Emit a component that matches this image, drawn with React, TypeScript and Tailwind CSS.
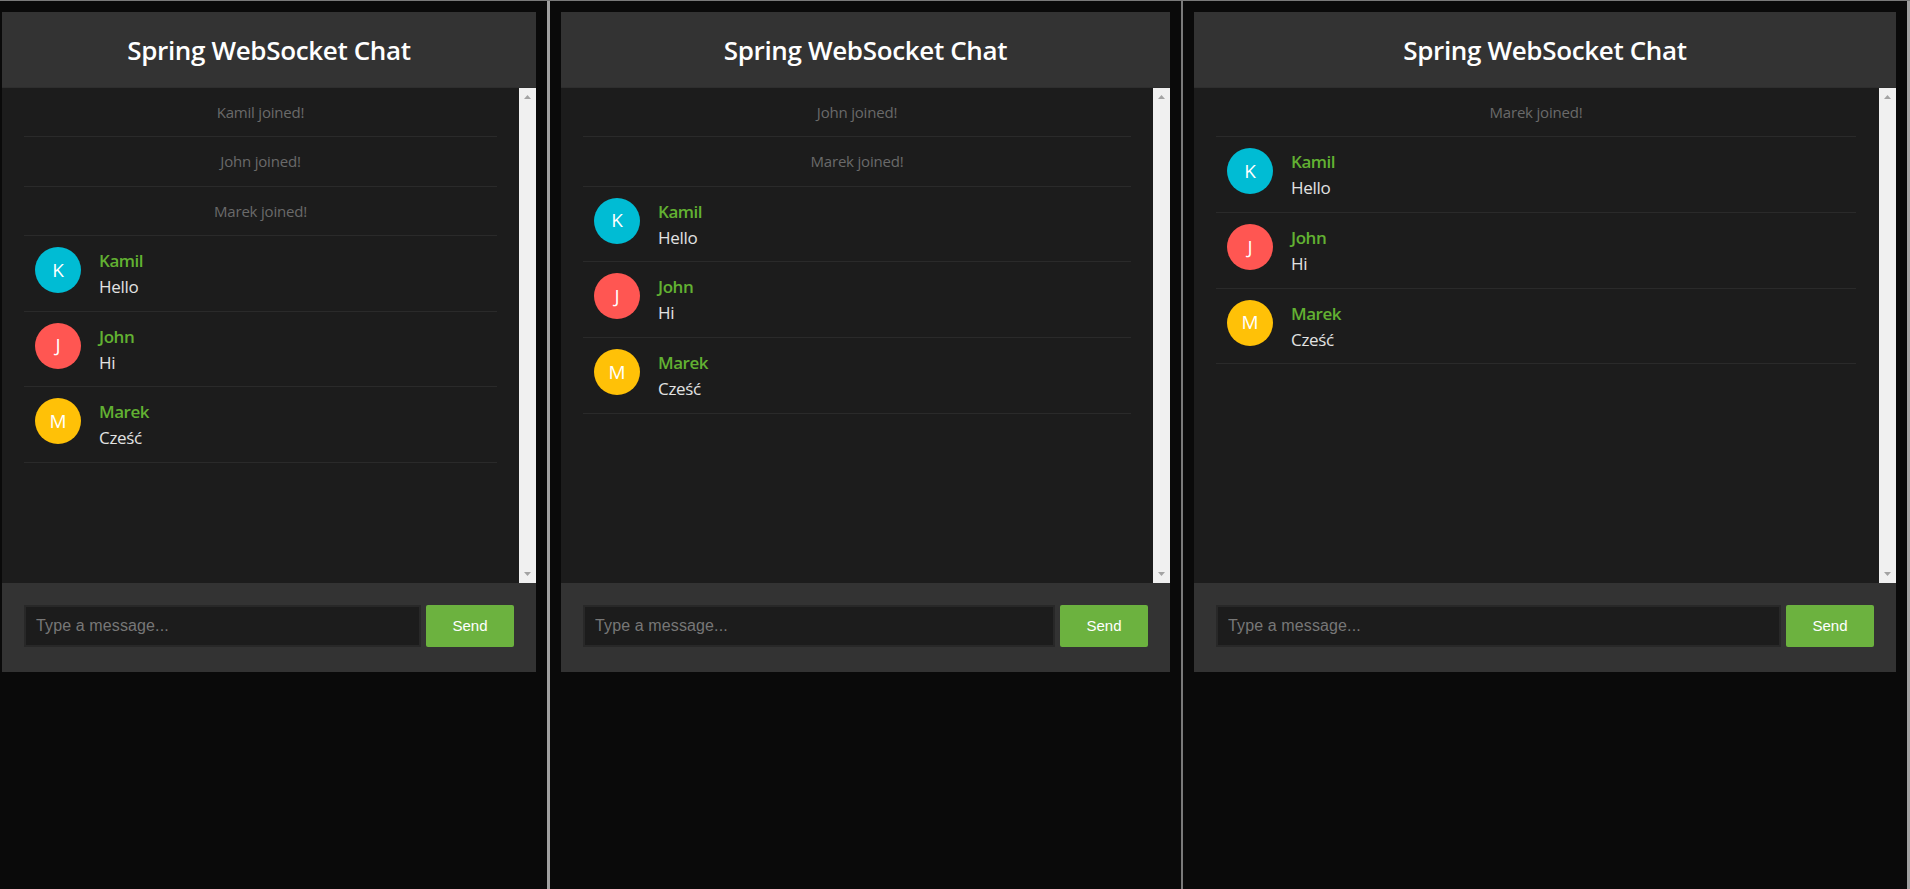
import React from 'react';

type Row =
  | { kind: 'system'; text: string }
  | { kind: 'chat'; name: string; text: string };

const avatarColors: Record<string, string> = {
  Kamil: 'bg-[#00bcd4]',
  John: 'bg-[#ff5652]',
  Marek: 'bg-[#ffc107]',
};

const chatRows: Row[] = [
  { kind: 'chat', name: 'Kamil', text: 'Hello' },
  { kind: 'chat', name: 'John', text: 'Hi' },
  { kind: 'chat', name: 'Marek', text: 'Cześć' },
];

const joined = (name: string): Row => ({ kind: 'system', text: `${name} joined!` });

const Scrollbar: React.FC = () => (
  <div className="flex w-[17px] shrink-0 flex-col items-center justify-between bg-[#f0f0f0] py-[7px]">
    <svg width="7" height="4" viewBox="0 0 7 4"><path d="M3.5 0L7 4H0z" fill="#a3a3a3" /></svg>
    <svg width="7" height="4" viewBox="0 0 7 4"><path d="M0 0H7L3.5 4z" fill="#a3a3a3" /></svg>
  </div>
);

const MessageRow: React.FC<{ row: Row }> = ({ row }) => {
  if (row.kind === 'system') {
    return (
      <li className="flex h-[49.33px] items-center justify-center border-b border-[#2a2a2a] text-[15px] tracking-[-0.2px] text-[#6a6a6a]">
        {row.text}
      </li>
    );
  }
  return (
    <li className="relative flex h-[75.67px] border-b border-[#2a2a2a] pl-[75px] pt-[11px]">
      <div className={`absolute left-[11px] top-[11px] flex h-[46px] w-[46px] items-center justify-center rounded-full text-[19px] text-white ${avatarColors[row.name]}`}>
        {row.name[0]}
      </div>
      <div>
        <div className="text-[17px] leading-[27px] font-semibold tracking-[-0.45px] text-[#62b132]">{row.name}</div>
        <div className="text-[17px] leading-[26px] tracking-[-0.3px] text-[#e2e2e2]">{row.text}</div>
      </div>
    </li>
  );
};

const ChatPanel: React.FC<{ rows: Row[]; width: string; gutter: string }> = ({ rows, width, gutter }) => (
  <div className={`flex h-[660px] shrink-0 flex-col bg-[#333333] ${width}`}>
    <header className="flex h-[76px] shrink-0 items-center justify-center border-b border-[#2e2e2e] pt-[1px]">
      <h1 className="text-[26px] font-semibold tracking-[-0.35px] text-white">Spring WebSocket Chat</h1>
    </header>
    <div className="flex h-[495px] shrink-0 bg-[#1c1c1c]">
      <ul className={`min-w-0 flex-1 pl-[22px] ${gutter}`}>
        {rows.map((row, i) => (
          <MessageRow key={i} row={row} />
        ))}
      </ul>
      <Scrollbar />
    </div>
    <form className="flex flex-1 gap-[5px] pb-[25px] pl-[22px] pr-[22px] pt-[22px]">
      <input
        placeholder="Type a message..."
        className="h-[42px] min-w-0 flex-1 border-2 border-[#282828] bg-[#1c1c1c] px-[10px] text-[16px] tracking-[0.12px] outline-none placeholder:text-[#777777] font-['Liberation_Sans',Arial,sans-serif]"
      />
      <button
        type="button"
        className="h-[42px] w-[88px] shrink-0 rounded-[2px] bg-[#6cb23f] text-[15px] text-white font-['Liberation_Sans',Arial,sans-serif]"
      >
        Send
      </button>
    </form>
  </div>
);

const App: React.FC = () => (
  <div className="flex h-[889px] w-full overflow-hidden border-t border-[#7a7a7a] bg-[#0a0a0a] font-['Open_Sans','Noto_Sans',sans-serif]">
    <section className="w-[550px] shrink-0 border-r-[3px] border-[#a0a0a0] pl-[2px] pt-[11px]">
      <ChatPanel width="w-[534px]" gutter="pr-[22px]" rows={[joined('Kamil'), joined('John'), joined('Marek'), ...chatRows]} />
    </section>
    <section className="w-[633px] shrink-0 border-r-2 border-[#7a7a7a] pl-[11px] pt-[11px]">
      <ChatPanel width="w-[609px]" gutter="pr-[22px]" rows={[joined('John'), joined('Marek'), ...chatRows]} />
    </section>
    <section className="flex-1 border-r-[3px] border-[#a0a0a0] pl-[11px] pt-[11px]">
      <ChatPanel width="w-[702px]" gutter="pr-[23px]" rows={[joined('Marek'), ...chatRows]} />
    </section>
  </div>
);

export default App;
